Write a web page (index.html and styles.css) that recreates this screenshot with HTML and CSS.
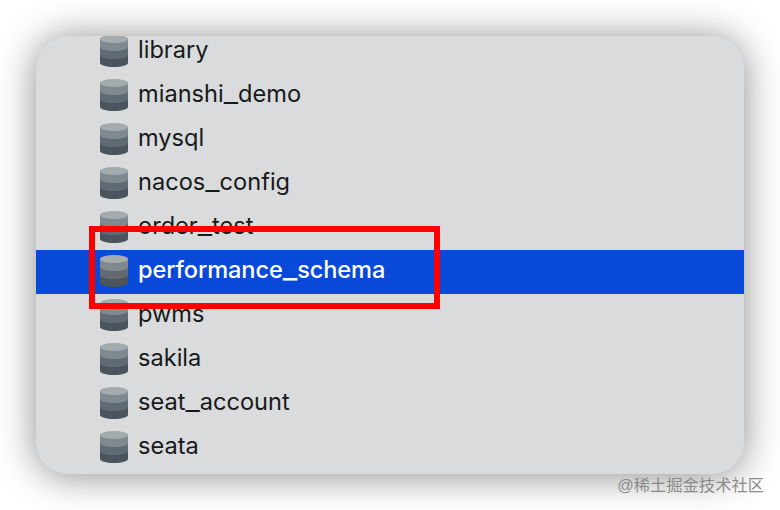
FILE: index.html
```
<!DOCTYPE html>
<html lang="en">
<head>
    <meta charset="UTF-8">
    <meta name="viewport" content="width=device-width, initial-scale=1.0">
    <title>Databases</title>
    <link rel="stylesheet" href="styles.css">
</head>
<body>

    <svg class="defs" width="0" height="0">
        <symbol id="db" viewBox="0 0 28 32">
            <path fill="#4b545d" d="M0 20H28V28C28 30.2 21.7 32 14 32S0 30.2 0 28Z"/>
            <path fill="#5f6a74" d="M0 12H28V20C28 22.2 21.7 24 14 24S0 22.2 0 20Z"/>
            <path fill="#7f8990" d="M0 4H28V12C28 14.2 21.7 16 14 16S0 14.2 0 12Z"/>
            <ellipse fill="#a4abaf" cx="14" cy="4" rx="14" ry="4"/>
        </symbol>
    </svg>

    <div class="panel">
        <ul class="db-list">
            <li><svg class="icon"><use href="#db"/></svg><span>library</span></li>
            <li><svg class="icon"><use href="#db"/></svg><span>mianshi<span class="line">_</span>demo</span></li>
            <li><svg class="icon"><use href="#db"/></svg><span>mysql</span></li>
            <li><svg class="icon"><use href="#db"/></svg><span>nacos<span class="line">_</span>config</span></li>
            <li><svg class="icon"><use href="#db"/></svg><span>order<span class="line">_</span>test</span></li>
            <li class="selected"><svg class="icon"><use href="#db"/></svg><span>performance<span class="line">_</span>schema</span></li>
            <li><svg class="icon"><use href="#db"/></svg><span>pwms</span></li>
            <li><svg class="icon"><use href="#db"/></svg><span>sakila</span></li>
            <li><svg class="icon"><use href="#db"/></svg><span>seat<span class="line">_</span>account</span></li>
            <li><svg class="icon"><use href="#db"/></svg><span>seata</span></li>
        </ul>
    </div>

    <div class="highlight"></div>
    <div class="watermark">@稀土掘金技术社区</div>

</body>
</html>
```
FILE: styles.css
```
body {
    margin: 0;
    padding: 36px;
    height: 510px;
    box-sizing: border-box;
    position: relative;
    overflow: hidden;
    background-color: #fff;
    font-family: Inter, "Noto Sans", sans-serif;
}
.defs {
    position: absolute;
}
.panel {
    height: 438px;
    overflow: hidden;
    border-radius: 32px;
    background-color: #d9dbdc;
    box-shadow: 0 2px 38px rgba(0,0,0,0.46);
}
.db-list {
    list-style: none;
    margin: -6px 0 0;
    padding: 0;
}
.db-list li {
    display: flex;
    align-items: flex-start;
    gap: 10px;
    height: 44px;
    padding: 5px 0 0 64px;
    box-sizing: border-box;
    font-size: 23.6px;
    line-height: 30px;
    color: #18191a;
    white-space: nowrap;
}
/* wider and lower underscore */
.line {
    font-size: 32px;
    font-weight: 300;
    line-height: 0;
}
.db-list .selected {
    background-color: #0849d9;
    color: #fff;
    font-weight: 500;
    letter-spacing: -0.12px;
}
.selected .line {
    font-weight: 400;
}
.selected .icon {
    filter: grayscale(0.3);
}
.icon {
    width: 28px;
    height: 32px;
    flex: none;
}
/* red frame drawn over the selected row */
.highlight {
    position: absolute;
    left: 89px;
    top: 226px;
    width: 351px;
    height: 83px;
    box-sizing: border-box;
    border: 6px solid #fe0000;
}
.watermark {
    position: absolute;
    right: 16px;
    bottom: 13px;
    font-family: "Liberation Sans", "Noto Sans CJK SC", sans-serif;
    font-size: 16.3px;
    line-height: 24px;
    color: #8b8b8b;
    white-space: nowrap;
}
```
